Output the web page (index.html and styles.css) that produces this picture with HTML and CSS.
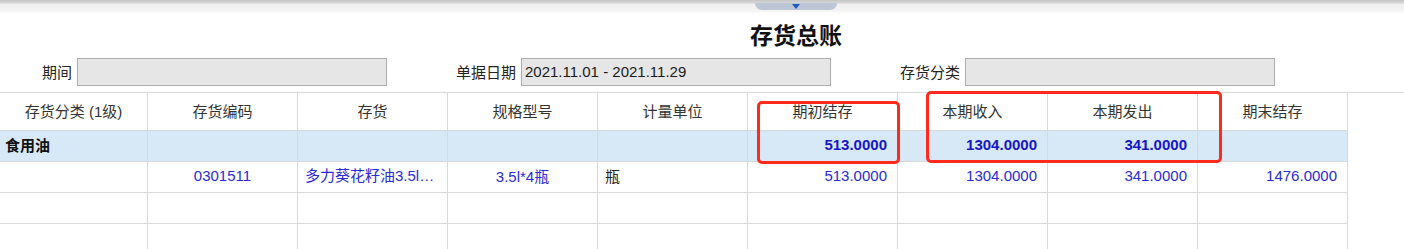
FILE: index.html
```html
<!DOCTYPE html>
<html lang="zh">
<head>
<meta charset="utf-8">
<title>存货总账</title>
<link rel="stylesheet" href="styles.css">
</head>
<body>
<div class="topbar">
  <div class="handle"><span class="tri"></span></div>
</div>
<h1 class="title">存货总账</h1>
<div class="filters">
  <div class="field"><label class="lbl">期间</label><div class="inp"></div></div>
  <div class="field"><label class="lbl">单据日期</label><div class="inp">2021.11.01 - 2021.11.29</div></div>
  <div class="field"><label class="lbl">存货分类</label><div class="inp"></div></div>
</div>
<div class="grid-wrap">
  <div class="row head">
    <div class="c ctr">存货分类 (1级)</div>
    <div class="c ctr">存货编码</div>
    <div class="c ctr">存货</div>
    <div class="c ctr">规格型号</div>
    <div class="c ctr">计量单位</div>
    <div class="c ctr">期初结存</div>
    <div class="c ctr">本期收入</div>
    <div class="c ctr">本期发出</div>
    <div class="c ctr">期末结存</div>
  </div>
  <div class="row sum">
    <div class="c bold">食用油</div>
    <div class="c"></div>
    <div class="c"></div>
    <div class="c"></div>
    <div class="c"></div>
    <div class="c num">513.0000</div>
    <div class="c num">1304.0000</div>
    <div class="c num">341.0000</div>
    <div class="c"></div>
  </div>
  <div class="row data">
    <div class="c"></div>
    <div class="c ctr">0301511</div>
    <div class="c left ell">多力葵花籽油3.5l*4瓶</div>
    <div class="c ctr">3.5l*4瓶</div>
    <div class="c left dark">瓶</div>
    <div class="c num">513.0000</div>
    <div class="c num">1304.0000</div>
    <div class="c num">341.0000</div>
    <div class="c num">1476.0000</div>
  </div>
  <div class="row data">
    <div class="c"></div><div class="c"></div><div class="c"></div><div class="c"></div><div class="c"></div><div class="c"></div><div class="c"></div><div class="c"></div><div class="c"></div>
  </div>
  <div class="row data">
    <div class="c"></div><div class="c"></div><div class="c"></div><div class="c"></div><div class="c"></div><div class="c"></div><div class="c"></div><div class="c"></div><div class="c"></div>
  </div>
  <div class="mark mark1"></div>
  <div class="mark mark2"></div>
</div>
</body>
</html>
```

FILE: styles.css
```css
html, body {
  margin: 0;
  padding: 0;
  background: #fff;
  overflow: hidden;
}
body {
  font-family: "Liberation Sans", "Noto Sans CJK SC", sans-serif;
  font-size: 15px;
  color: #222;
  width: 1404px;
  height: 249px;
}
.topbar {
  height: 14px;
  display: flex;
  background: linear-gradient(#c6c6c6 0, #d6d6d6 3px, #eeeeee 4px, #f5f5f5 11px, #ffffff 14px);
}
.handle {
  margin-left: 755px;
  margin-top: 3px;
  width: 82px;
  height: 7px;
  background: #bcc6d6;
  border-radius: 0 0 8px 8px;
  display: flex;
  justify-content: center;
}
.tri {
  margin-top: 1px;
  width: 0;
  height: 0;
  border-left: 4px solid transparent;
  border-right: 4px solid transparent;
  border-top: 5px solid #1f5bbf;
}
.title {
  margin: 7px 0 0 0;
  padding-left: 750px;
  font-size: 23px;
  line-height: 30px;
  font-weight: bold;
  color: #111;
  height: 30px;
}
.filters {
  display: flex;
  margin-top: 7px;
  height: 28px;
}
.field {
  width: 444px;
  display: flex;
  align-items: center;
}
.lbl {
  width: 72px;
  text-align: right;
  margin-right: 5px;
  font-size: 15px;
  color: #222;
  padding-bottom: 1px;
}
.inp {
  width: 305px;
  height: 26px;
  line-height: 26px;
  background: #e6e6e6;
  border: 1px solid #adadad;
  padding-left: 3px;
  box-sizing: content-box;
  font-size: 15px;
  color: #1a1a1a;
}
.grid-wrap {
  position: relative;
  margin-top: 6px;
  border-top: 1px solid #d9d9d9;
}
.row {
  display: grid;
  grid-template-columns: 148px repeat(8, 150px);
  width: 1348px;
  height: 31px;
  border-bottom: 1px solid #d9d9d9;
  box-sizing: border-box;
}
.row.head { height: 38px; color: #333; }
.row.sum { background: #d7e8f7; }
.c {
  border-right: 1px solid #d9d9d9;
  display: flex;
  align-items: center;
  overflow: hidden;
  white-space: nowrap;
  min-width: 0;
  padding-bottom: 3px;
  box-sizing: border-box;
}
.head .c { padding-bottom: 2px; }
.ctr { justify-content: center; }
.left { padding-left: 7px; }
.num { justify-content: flex-end; padding-right: 10px; }
.bold { font-weight: bold; padding-left: 5px; color: #111; }
.sum .num { font-weight: bold; color: #1616c8; }
.data .c { color: #2a2ad6; }
.data .c.dark { color: #222; }
.ell {
  display: block;
  line-height: 27px;
  text-overflow: ellipsis;
  padding-right: 9px;
}
.mark {
  position: absolute;
  border: 3px solid #ff2a1c;
  border-radius: 5px;
  box-sizing: border-box;
}
.mark1 { left: 757px; top: 8px; width: 143px; height: 63px; }
.mark2 { left: 926px; top: -2px; width: 296px; height: 72px; }
```
